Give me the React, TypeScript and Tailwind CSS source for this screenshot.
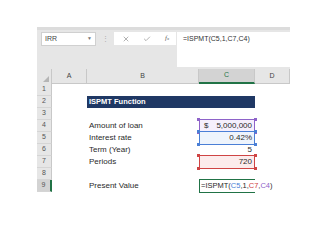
import { X, Check } from "lucide-react";

const cols = [
  { key: "A", w: "w-[35px]" },
  { key: "B", w: "w-[112px]" },
  { key: "C", w: "w-[56px]" },
  { key: "D", w: "w-[35px]" },
];

type RefProps = { border: string; fill: string; handle: string; children?: React.ReactNode };

const Handles = ({ handle }: { handle: string }) => (
  <>
    <span className={`absolute -left-[2px] -top-[2px] size-[3px] ${handle}`} />
    <span className={`absolute -right-[2px] -top-[2px] size-[3px] ${handle}`} />
    <span className={`absolute -left-[2px] -bottom-[2px] size-[3px] ${handle}`} />
    <span className={`absolute -right-[2px] -bottom-[2px] size-[3px] ${handle}`} />
  </>
);

const RefCell = ({ border, fill, handle, children }: RefProps) => (
  <div className="relative h-full w-[56px]">
    <div className={`absolute -top-px -bottom-px left-0 right-0 border ${border} ${fill}`} />
    <Handles handle={handle} />
    <div className="relative flex h-full items-center justify-end pr-[3px]">{children}</div>
  </div>
);

const RowHead = ({ n, active }: { n: number; active?: boolean }) => (
  <div
    className={`flex h-full w-[15px] items-center justify-center border-b border-[#d5d5d5] text-[7px] text-[#555] ${
      active ? "border-r-2 border-r-[#217346] bg-[#d3d3d3]" : "border-r border-r-[#c8c8c8] bg-[#e6e6e6]"
    }`}
  >
    {n}
  </div>
);

const Row = ({ n, active, b, c }: { n: number; active?: boolean; b?: React.ReactNode; c?: React.ReactNode }) => (
  <div className="flex h-[12px]">
    <RowHead n={n} active={active} />
    <div className="w-[35px]" />
    <div className="flex h-full w-[112px] items-center pl-[2px]">{b}</div>
    {c ?? <div className="w-[56px]" />}
    <div className="w-[35px]" />
  </div>
);

export default function App() {
  return (
    <div className="h-[240px] w-[320px] bg-white pl-[37px] pt-[27px] font-['Liberation_Sans',Arial,sans-serif] text-[8px] text-[#2a2a2a]">
      <div className="w-[253px]">
        {/* formula bar */}
        <div className="flex h-[42px] border-t-[3px] border-[#dcdcdc] bg-[#e6e6e6] pl-[4px] pt-[2px]">
          <div className="flex h-[14px] w-[55px] items-center justify-between border border-[#d0d0d0] bg-white px-[3px] text-[7px] text-[#444]">
            <span>IRR</span>
            <span className="text-[5px] text-[#777]">▼</span>
          </div>
          <div className="flex h-[14px] w-[18px] items-center justify-center text-[7px] text-[#aaa]">⋮</div>
          <div className="flex h-[13px] w-[62px] items-center justify-around bg-white pl-[1px]">
            <X size={8} strokeWidth={1.5} color="#666" />
            <Check size={8} strokeWidth={1.5} color="#666" />
            <span className="font-['Liberation_Serif',serif] text-[7px] italic text-[#666]">
              f<span className="text-[5px]">x</span>
            </span>
          </div>
          <div className="ml-px h-[35px] flex-1 bg-white pl-[6px] pt-[2px] text-[7px] text-[#333]">=ISPMT(C5,1,C7,C4)</div>
        </div>
        {/* column headers */}
        <div className="flex h-[15px] bg-[#e6e6e6] text-[7px] text-[#444]">
          <div className="relative w-[15px] border-r border-[#c8c8c8]">
            <span className="absolute bottom-[2px] right-[2px] h-0 w-0 border-b-[6px] border-l-[6px] border-b-[#b5b5b5] border-l-transparent" />
          </div>
          {cols.map((c) => (
            <div
              key={c.key}
              className={`flex items-center justify-center border-r border-[#c8c8c8] ${c.w} ${
                c.key === "C" ? "border-b-2 border-b-[#217346] bg-[#d3d3d3] text-[#217346]" : "border-b border-b-[#c8c8c8]"
              }`}
            >
              {c.key}
            </div>
          ))}
        </div>
        {/* rows */}
        <Row n={1} />
        <div className="flex h-[12px]">
          <RowHead n={2} />
          <div className="w-[35px]" />
          <div className="flex w-[168px] items-center bg-[#1f3864] pl-[2px] text-[7.5px] font-bold text-white">ISPMT Function</div>
          <div className="w-[35px]" />
        </div>
        <Row n={3} />
        <Row
          n={4}
          b="Amount of loan"
          c={
            <RefCell border="border-[#8e63c9]" fill="bg-[#f5effc]" handle="bg-[#8e63c9]">
              <div className="flex w-full justify-between pl-[5px]">
                <span>$</span>
                <span>5,000,000</span>
              </div>
            </RefCell>
          }
        />
        <Row
          n={5}
          b="Interest rate"
          c={
            <RefCell border="border-[#4a7fd6]" fill="bg-[#eef4fc]" handle="bg-[#4a7fd6]">
              0.42%
            </RefCell>
          }
        />
        <Row n={6} b="Term (Year)" c={<div className="flex w-[56px] items-center justify-end pr-[3px]">5</div>} />
        <Row
          n={7}
          b="Periods"
          c={
            <RefCell border="border-[#cf4444]" fill="bg-[#fcecec]" handle="bg-[#cf4444]">
              720
            </RefCell>
          }
        />
        <Row n={8} />
        <div className="flex h-[12px]">
          <RowHead n={9} active />
          <div className="w-[35px]" />
          <div className="flex h-full w-[112px] items-center pl-[2px]">Present Value</div>
          <div className="relative h-full w-[56px]">
            <div className="absolute -top-px -bottom-px left-0 right-0 border border-r-0 border-[#217346]" />
            <div className="relative flex h-full items-center whitespace-nowrap pl-[2px] text-[7.5px]">
              <span>=ISPMT(</span>
              <span className="text-[#4a7fd6]">C5</span>
              <span>,1,</span>
              <span className="text-[#cf4444]">C7</span>
              <span>,</span>
              <span className="text-[#8e63c9]">C4</span>
              <span>)</span>
              <span className="ml-px inline-block h-[8px] w-px bg-black" />
            </div>
          </div>
          <div className="w-[35px]" />
        </div>
      </div>
    </div>
  );
}
